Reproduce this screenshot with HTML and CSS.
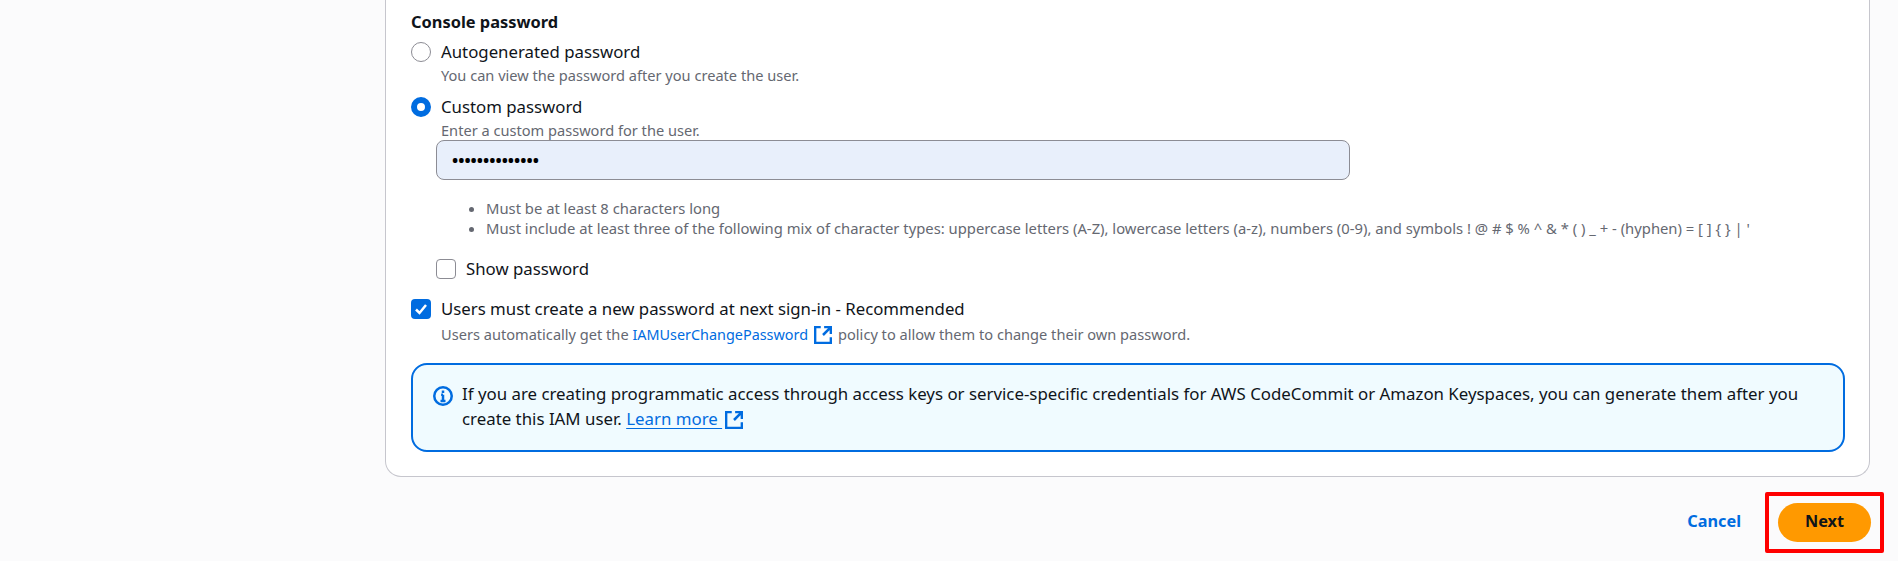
FILE: index.html
```html
<!DOCTYPE html>
<html lang="en">
<head>
<meta charset="utf-8">
<title>Console password</title>
<link rel="stylesheet" href="styles.css">
</head>
<body>
<main class="page">
  <section class="card">
    <h3 class="heading">Console password</h3>
    <div class="option">
      <span class="radio"></span>
      <div>
        <div class="label">Autogenerated password</div>
        <div class="hint">You can view the password after you create the user.</div>
      </div>
    </div>
    <div class="option option-second">
      <span class="radio radio-on"></span>
      <div>
        <div class="label">Custom password</div>
        <div class="hint">Enter a custom password for the user.</div>
      </div>
    </div>
    <div class="nested">
      <div class="input">••••••••••••••</div>
      <ul class="rules">
        <li>Must be at least 8 characters long</li>
        <li>Must include at least three of the following mix of character types: uppercase letters (A-Z), lowercase letters (a-z), numbers (0-9), and symbols ! @ # $ % ^ &amp; * ( ) _ + - (hyphen) = [ ] { } | '</li>
      </ul>
      <div class="option show">
        <span class="check"></span>
        <div class="label">Show password</div>
      </div>
    </div>
    <div class="option must">
      <span class="check check-on">
        <svg viewBox="0 0 20 20" class="tick"><path d="M5 10.500l3.500 3.500L15 6"/></svg>
      </span>
      <div>
        <div class="label">Users must create a new password at next sign-in - Recommended</div>
        <div class="hint hint-link"><span>Users automatically get the </span><a class="link-plain">IAMUserChangePassword</a><svg viewBox="0 0 16 16" class="ext ext-inline"><path d="M15 10v5H1V1h5M9 1h6v6M15 1L8 8"/></svg><span>policy to allow them to change their own password.</span></div>
      </div>
    </div>
    <div class="info">
      <svg viewBox="0 0 16 16" class="info-icon"><circle cx="8" cy="8" r="7"/><path d="M8 7v5M6 12h4M6.500 7H8M8 3.500v2"/></svg>
      <p class="info-text">If you are creating programmatic access through access keys or service-specific credentials for AWS CodeCommit or Amazon Keyspaces, you can generate them after you create this IAM user. <a class="link-under">Learn more&nbsp;</a><svg viewBox="0 0 16 16" class="ext ext-learn"><path d="M15 10v5H1V1h5M9 1h6v6M15 1L8 8"/></svg></p>
    </div>
  </section>
  <footer class="actions">
    <a class="cancel">Cancel</a>
    <button class="next">Next</button>
    <span class="highlight"></span>
  </footer>
</main>
</body>
</html>
```
FILE: styles.css
```css
* { box-sizing: border-box; }
html, body { margin: 0; height: 561px; overflow: hidden; }
body {
  background: #fbfbfc;
  color: #0f141a;
  font-family: "Noto Sans", sans-serif;
  font-size: 17px;
}
.page { padding: 0 28px 0 385px; }
.card {
  height: 477px;
  background: #fff;
  border: 1px solid #c6c6cd;
  border-top: 0;
  border-radius: 0 0 16px 16px;
  padding: 12px 24px 0 25px;
}
.heading { margin: 0; font-size: 16.400px; line-height: 20px; font-weight: 700; }
.option { display: flex; gap: 10px; margin-top: 9px; }
.option-second { margin-top: 11px; }
.radio {
  width: 20px; height: 20px; flex: none; margin-top: 1px;
  border: 1.500px solid #8c8c94; border-radius: 50%; background: #fff;
}
.radio-on { border: 6px solid #006ce0; }
.label { font-size: 16.800px; line-height: 22px; }
.hint { font-size: 14.600px; line-height: 20px; color: #656871; margin-top: 2px; }
.nested { padding-left: 25px; }
.input {
  height: 40px; width: 914px;
  background: #e8effb; border: 1px solid #8c8c94; border-radius: 8px;
  padding: 0 15px; line-height: 38px; font-size: 16.500px; font-weight: 700; color: #000;
}
.rules { margin: 18px 0 0; padding: 0 0 0 50px; font-size: 14.800px; line-height: 20px; color: #656871; }
.show { margin: 20px 0 0; }
.check {
  width: 20px; height: 20px; flex: none; margin-top: 1px;
  border: 1.500px solid #8c8c94; border-radius: 4px; background: #fff;
}
.check-on { border: 0; background: #006ce0; display: block; }
.tick { display: block; width: 20px; height: 20px; fill: none; stroke: #fff; stroke-width: 2.500; }
.must { margin-top: 18px; }
.hint-link { margin-top: 4px; }
.link-plain { color: #006ce0; font-size: 14.400px; }
.ext { width: 18px; height: 18px; vertical-align: -4px; fill: none; stroke: #006ce0; stroke-width: 2.200; }
.ext-inline { margin: 0 6px; }
.ext-learn { margin-left: 3px; }
.info {
  display: flex; gap: 9px; margin-top: 18px; height: 89px;
  background: #f0fbff; border: 2px solid #006ce0; border-radius: 16px;
  padding: 16px 20px 0 20px;
}
.info-icon { width: 20px; height: 20px; flex: none; margin-top: 5px; fill: none; stroke: #006ce0; stroke-width: 2; }
.info-text { margin: 0; font-size: 16.850px; line-height: 25px; }
.link-under { color: #006ce0; text-decoration: underline; text-underline-offset: 3px; }
.actions {
  position: relative;
  display: flex; justify-content: flex-end; align-items: center; gap: 37px;
  margin: 26px -1px 0 0;
}
.cancel { color: #006ce0; font-weight: 700; font-size: 16.300px; padding-bottom: 3px; }
.next {
  width: 93px; height: 39px; border: 0; border-radius: 20px;
  background: #ff9900; color: #0f141a;
  font: 700 16.300px "Noto Sans", sans-serif;
  padding: 0 0 3px;
}
.highlight {
  position: absolute; right: -13px; top: -11px;
  width: 119px; height: 61px;
  border: 4px solid #ff0000; border-radius: 2px;
}
```
